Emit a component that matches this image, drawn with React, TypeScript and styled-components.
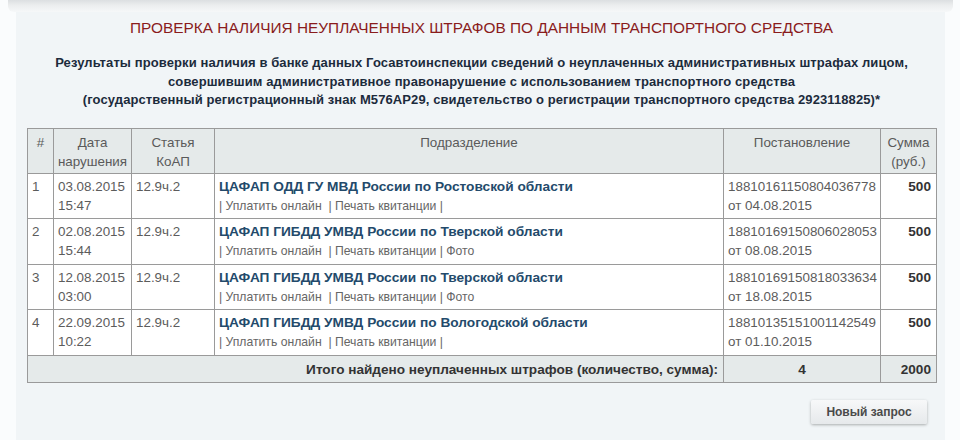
import React from "react";
import styled, { createGlobalStyle } from "styled-components";

const Global = createGlobalStyle`
  html, body { margin: 0; padding: 0; }
  body {
    background: #fafcfd;
    font-family: Arial, "Liberation Sans", sans-serif;
    width: 960px;
    height: 440px;
    overflow: hidden;
  }
`;

const Page = styled.div`
  display: flex;
  flex-direction: column;
  padding: 0 15px 0 16px;
`;

const TopShadow = styled.div`
  height: 12px;
  margin: 0 -8px;
  background: linear-gradient(to bottom, #dcdfe1 0%, #eceeef 45%, #f6f8f9 100%);
  border-radius: 0 0 6px 6px;
`;

const Panel = styled.div`
  background: #f1f5f7;
  padding: 6px 9px 16px 11px;
  display: flex;
  flex-direction: column;
`;

const Title = styled.h1`
  margin: 0;
  text-align: center;
  color: #8a1c1c;
  font-size: 15.4px;
  font-weight: normal;
  line-height: 20px;
`;

const Subtitle = styled.p`
  margin: 16px 0 0;
  text-align: center;
  color: #1c2b3c;
  font-size: 13px;
  font-weight: bold;
  line-height: 18.5px;
  letter-spacing: 0.1px;
`;

const Table = styled.table`
  margin-top: 18px;
  width: 909px;
  table-layout: fixed;
  border-collapse: collapse;
  background: #fff;
  color: #5c5c5c;
  font-size: 13.4px;
  line-height: 19px;
  border: 1px solid #9a9a9a;
`;

const Th = styled.th<{ $w: number }>`
  box-sizing: border-box;
  width: ${(p) => p.$w}px;
  background: #e5eaea;
  font-weight: normal;
  text-align: center;
  vertical-align: top;
  padding: 4px 3px 1px;
  height: 45px;
  border: 1px solid #9a9a9a;
  color: #5a5a5a;
`;

const Td = styled.td<{ $align?: string; $bold?: boolean }>`
  box-sizing: border-box;
  text-align: ${(p) => p.$align || "left"};
  font-weight: ${(p) => (p.$bold ? "bold" : "normal")};
  color: ${(p) => (p.$bold ? "#333" : "#5c5c5c")};
  font-size: ${(p) => (p.$bold ? "13.6px" : "13.4px")};
  vertical-align: top;
  padding: 3px 5px 2px 4px;
  height: 45.5px;
  border: 1px solid #9a9a9a;
  border-top-color: #b0b0b0;
  white-space: nowrap;
`;

const OrgLink = styled.a`
  display: block;
  color: #234a6b;
  font-weight: bold;
  text-decoration: none;
  font-size: 13.7px;
  line-height: 19px;
`;

const Actions = styled.div`
  font-size: 12.2px;
  line-height: 20px;
  color: #666;
  white-space: pre;
`;

const TotalRow = styled.tr`
  background: #e5eaea;
`;

const TotalTd = styled.td<{ $align: string }>`
  text-align: ${(p) => p.$align};
  font-weight: bold;
  color: #333;
  font-size: 13.6px;
  padding: 4px 5px 3px;
  line-height: 19px;
  border: 1px solid #9a9a9a;
`;

const ButtonRow = styled.div`
  display: flex;
  justify-content: flex-end;
  margin-top: 17px;
  padding-right: 9px;
`;

const Button = styled.button`
  width: 116px;
  height: 24px;
  border: none;
  border-radius: 2px;
  background: linear-gradient(to bottom, #f7f8f9, #e6e9eb);
  box-shadow: 0 1px 3px rgba(0, 0, 0, 0.3);
  font-family: Arial, "Liberation Sans", sans-serif;
  font-size: 12px;
  font-weight: bold;
  color: #4a4a4a;
  padding: 0;
`;

const rows = [
  {
    n: "1",
    date: "03.08.2015",
    time: "15:47",
    art: "12.9ч.2",
    org: "ЦАФАП ОДД ГУ МВД России по Ростовской области",
    actions: "| Уплатить онлайн  | Печать квитанции |",
    num: "18810161150804036778",
    from: "от 04.08.2015",
  },
  {
    n: "2",
    date: "02.08.2015",
    time: "15:44",
    art: "12.9ч.2",
    org: "ЦАФАП ГИБДД УМВД России по Тверской области",
    actions: "| Уплатить онлайн  | Печать квитанции | Фото",
    num: "18810169150806028053",
    from: "от 08.08.2015",
  },
  {
    n: "3",
    date: "12.08.2015",
    time: "03:00",
    art: "12.9ч.2",
    org: "ЦАФАП ГИБДД УМВД России по Тверской области",
    actions: "| Уплатить онлайн  | Печать квитанции | Фото",
    num: "18810169150818033634",
    from: "от 18.08.2015",
  },
  {
    n: "4",
    date: "22.09.2015",
    time: "10:22",
    art: "12.9ч.2",
    org: "ЦАФАП ГИБДД УМВД России по Вологодской области",
    actions: "| Уплатить онлайн  | Печать квитанции |",
    num: "18810135151001142549",
    from: "от 01.10.2015",
  },
];

export default function App() {
  return (
    <>
      <Global />
      <Page>
        <TopShadow />
        <Panel>
          <Title>ПРОВЕРКА НАЛИЧИЯ НЕУПЛАЧЕННЫХ ШТРАФОВ ПО ДАННЫМ ТРАНСПОРТНОГО СРЕДСТВА</Title>
          <Subtitle>
            Результаты проверки наличия в банке данных Госавтоинспекции сведений о неуплаченных административных штрафах лицом,
            <br />
            совершившим административное правонарушение с использованием транспортного средства
            <br />
            (государственный регистрационный знак М576АР29, свидетельство о регистрации транспортного средства 2923118825)*
          </Subtitle>
          <Table>
            <thead>
              <tr>
                <Th $w={26}>#</Th>
                <Th $w={78}>Дата нарушения</Th>
                <Th $w={83}>Статья КоАП</Th>
                <Th $w={509}>Подразделение</Th>
                <Th $w={157}>Постановление</Th>
                <Th $w={56}>Сумма (руб.)</Th>
              </tr>
            </thead>
            <tbody>
              {rows.map((r) => (
                <tr key={r.n}>
                  <Td>{r.n}</Td>
                  <Td>
                    {r.date}
                    <br />
                    {r.time}
                  </Td>
                  <Td>{r.art}</Td>
                  <Td>
                    <OrgLink href="#">{r.org}</OrgLink>
                    <Actions>{r.actions}</Actions>
                  </Td>
                  <Td>
                    {r.num}
                    <br />
                    {r.from}
                  </Td>
                  <Td $align="right" $bold>
                    500
                  </Td>
                </tr>
              ))}
              <TotalRow>
                <TotalTd $align="right" colSpan={4}>
                  Итого найдено неуплаченных штрафов (количество, сумма):
                </TotalTd>
                <TotalTd $align="center">4</TotalTd>
                <TotalTd $align="right">2000</TotalTd>
              </TotalRow>
            </tbody>
          </Table>
          <ButtonRow>
            <Button>Новый запрос</Button>
          </ButtonRow>
        </Panel>
      </Page>
    </>
  );
}
